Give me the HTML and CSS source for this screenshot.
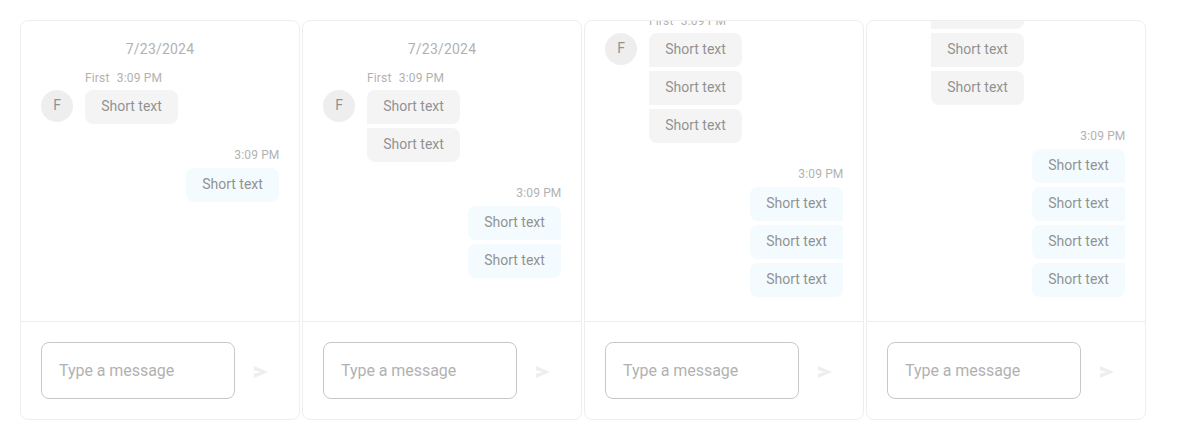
FILE: index.html
```
<!DOCTYPE html>
<html lang="en">
<head>
<meta charset="utf-8">
<title>Chat</title>
<link rel="stylesheet" href="styles.css">
</head>
<body>
<main class="chats"></main>
<template id="chat-template">
  <section class="chat">
    <div class="messages"></div>
    <div class="message-box">
      <div class="field">Type a message</div>
      <div class="send">
        <svg width="16" height="12" viewBox="0 0 16 12"><path d="M1 0L15 6L1 12V7.7L8 6L1 4.3Z"/></svg>
      </div>
    </div>
  </section>
</template>
<script src="chat.js"></script>
</body>
</html>
```

FILE: styles.css
```
body {
  margin: 0;
  background: #fff;
  font-family: Roboto, sans-serif;
}

.chats {
  display: flex;
  gap: 2px;
  padding: 20px;
}

.chat {
  display: flex;
  flex-direction: column;
  flex: none;
  box-sizing: border-box;
  width: 280px;
  height: 400px;
  border: 1px solid #dfdfdf;
  border-radius: 8px;
  overflow: hidden;
  opacity: 0.5;
}

.messages {
  display: flex;
  flex-direction: column;
  gap: 24px;
  box-sizing: border-box;
  height: 300px;
  padding: 18px 20px 24px;
  overflow: hidden;
}

.messages.scrolled {
  justify-content: flex-end;
}

.day {
  flex: none;
  height: 20px;
  margin-bottom: -13px;
  color: #656565;
  font-size: 14px;
  line-height: 20px;
  letter-spacing: 0.2px;
  text-align: center;
}

.group {
  display: grid;
  grid-template-columns: 32px auto;
  column-gap: 12px;
  flex: none;
  justify-content: start;
}

.group.own {
  grid-template-columns: auto;
  justify-content: end;
}

.avatar {
  display: flex;
  justify-content: center;
  width: 32px;
  height: 32px;
  margin-top: 20px;
  border-radius: 50%;
  background: #dfdfdf;
  color: #242424;
  font-size: 14px;
  line-height: 31px;
}

.content {
  display: flex;
  flex-direction: column;
  align-items: flex-start;
  gap: 4px;
}

.own .content {
  align-items: flex-end;
}

.info {
  display: flex;
  gap: 7.3px;
  color: #656565;
  font-size: 12px;
  line-height: 16px;
  letter-spacing: 0.15px;
}

.own .info {
  margin-top: -1px;
  margin-right: -0.5px;
  padding-bottom: 1px;
}

.bubble {
  box-sizing: border-box;
  width: 93px;
  height: 34px;
  border-radius: 0 8px 8px 0;
  background: #ebebeb;
  color: #242424;
  font-size: 14px;
  line-height: 32px;
  text-align: center;
  white-space: nowrap;
}

.bubble.first {
  border-top-left-radius: 8px;
}

.bubble.last {
  border-bottom-left-radius: 8px;
}

.own .bubble {
  border-radius: 8px 0 0 8px;
  background: #e8f8ff;
}

.own .bubble.first {
  border-top-right-radius: 8px;
}

.own .bubble.last {
  border-bottom-right-radius: 8px;
}

.message-box {
  display: flex;
  align-items: center;
  flex: 1;
  gap: 18px;
  padding: 0 20px;
  border-top: 1px solid #dfdfdf;
}

.field {
  box-sizing: border-box;
  width: 194px;
  height: 57px;
  padding-left: 17px;
  border: 1px solid #919191;
  border-radius: 8px;
  color: #656565;
  font-size: 16px;
  line-height: 55px;
  letter-spacing: -0.05px;
}

.send {
  display: flex;
  padding-top: 2px;
}

.send svg {
  fill: #dfdfdf;
}
```

FILE: chat.js
```
const chats = [
  { count: 1, day: true },
  { count: 2, day: true },
  { count: 3, scrolled: true },
  { count: 4, scrolled: true }
];

function bubbles(count) {
  return Array.from({ length: count }, (_, i) => {
    const cls = ['bubble', i === 0 ? 'first' : '', i === count - 1 ? 'last' : ''].join(' ');
    return `<div class="${cls}">Short text</div>`;
  }).join('');
}

for (const chat of chats) {
  const node = document.getElementById('chat-template').content.cloneNode(true);
  const list = node.querySelector('.messages');
  if (chat.scrolled) list.classList.add('scrolled');
  list.innerHTML = `
    ${chat.day ? '<div class="day">7/23/2024</div>' : ''}
    <div class="group">
      <div class="avatar">F</div>
      <div class="content">
        <div class="info"><span>First</span><span>3:09 PM</span></div>
        ${bubbles(chat.count)}
      </div>
    </div>
    <div class="group own">
      <div class="content">
        <div class="info"><span>3:09 PM</span></div>
        ${bubbles(chat.count)}
      </div>
    </div>`;
  document.querySelector('.chats').append(node);
}
```
